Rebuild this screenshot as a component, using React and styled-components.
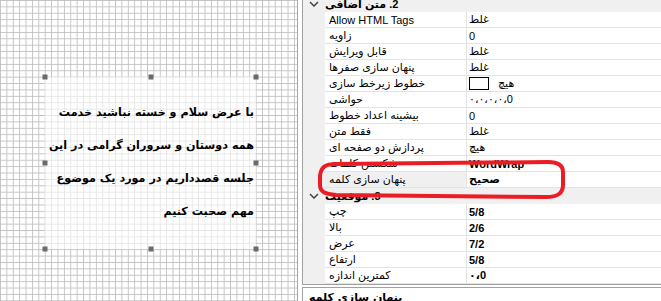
import React from 'react';
import styled, { createGlobalStyle } from 'styled-components';

const GlobalStyle = createGlobalStyle`
  html, body {
    margin: 0;
    padding: 0;
    background: #fff;
  }
  body {
    width: 661px;
    height: 301px;
    overflow: hidden;
    font-family: "Liberation Sans", "DejaVu Sans", sans-serif;
  }
`

const Screen = styled.div`
  position: relative;
  display: flex;
  width: 661px;
  height: 301px;
  overflow: hidden;
  background: #fff;
`

const Canvas = styled.div`
  width: 298px;
  height: 301px;
  flex-shrink: 0;
  box-sizing: border-box;
  border-right: 1px solid #a8a8a8;
  padding: 77px 0 0 45px;
  background-color: #fff;
  background-image:
    linear-gradient(to right, #c2c2c2 1px, transparent 1px),
    linear-gradient(to bottom, #c2c2c2 1px, transparent 1px);
  background-size: 6.4px 6.4px;
`

const TextBox = styled.div`
  position: relative;
  width: 211px;
  height: 172px;
  box-sizing: border-box;
  padding: 19px 2px 0 0;
  background: rgba(255, 255, 255, 0.6);
  direction: rtl;
  text-align: right;
  white-space: nowrap;
  font-family: "DejaVu Sans", sans-serif;
  font-weight: bold;
  font-size: 11.2px;
  line-height: 33px;
  color: #000;
`

const Handle = styled.span`
  position: absolute;
  left: ${p => p.$x}%;
  top: ${p => p.$y}%;
  width: 5px;
  height: 5px;
  background: #6b6b6b;
  transform: translate(-50%, -50%);
`

const Panel = styled.div`
  display: flex;
  flex-direction: column;
  flex: 1;
  min-width: 0;
  margin-left: 4px;
`

const Grid = styled.div`
  height: 285px;
  flex-shrink: 0;
  box-sizing: border-box;
  border-left: 1px solid #a0a0a0;
  border-bottom: 1px solid #a0a0a0;
  overflow: hidden;
  background: #f0f0f0;
`

const List = styled.div`
  margin-top: -4px;
`

const Row = styled.div`
  display: grid;
  grid-template-columns: 22px 142px 1fr;
  height: 16px;
  font-size: 11px;
  color: #000;
`

const Gutter = styled.div`
  display: flex;
  align-items: center;
  justify-content: center;
  background: #f0f0f0;
`

const Name = styled.div`
  display: flex;
  align-items: center;
  box-sizing: border-box;
  padding-left: 4px;
  border-bottom: 1px solid #e3e3e3;
  border-right: 1px solid #e3e3e3;
  background: ${p => (p.$selected ? '#f0f0f0' : '#fff')};
  white-space: nowrap;
  overflow: hidden;
`

const Value = styled.div`
  display: flex;
  align-items: center;
  gap: 9px;
  box-sizing: border-box;
  padding-left: 2px;
  border-bottom: 1px solid #e3e3e3;
  background: #fff;
  font-weight: ${p => (p.$bold ? 'bold' : 'normal')};
  white-space: nowrap;
`

const Swatch = styled.span`
  width: 18px;
  height: 11px;
  border: 1px solid #000;
  background: #fff;
`

const CategoryRow = styled(Row)`
  background: #f0f0f0;
`

const CategoryLabel = styled.div`
  grid-column: 2 / 4;
  display: flex;
  align-items: center;
  direction: rtl;
  justify-content: flex-end;
  font-weight: bold;
`

const Description = styled.div`
  flex: 1;
  min-height: 0;
  overflow: hidden;
  margin-top: 2px;
  box-sizing: border-box;
  border-top: 1px solid #a0a0a0;
  border-left: 1px solid #a0a0a0;
  padding: 3px 6px 0;
  font-family: "DejaVu Sans", sans-serif;
  font-size: 11px;
  font-weight: bold;
`

const Overlay = styled.svg`
  position: absolute;
  left: 0;
  top: 0;
  pointer-events: none;
`

const Chevron = () => (
  <svg width="10" height="6" viewBox="0 0 10 6">
    <polyline points="1,1 5,5 9,1" fill="none" stroke="#444" strokeWidth="1.5" />
  </svg>
)

const Category = ({ label }) => (
  <CategoryRow>
    <Gutter><Chevron /></Gutter>
    <CategoryLabel>{label}</CategoryLabel>
  </CategoryRow>
)

const Prop = ({ name, value, bold, selected, swatch }) => (
  <Row>
    <Gutter />
    <Name $selected={selected}>{name}</Name>
    <Value $bold={bold}>
      {swatch && <Swatch />}
      {value}
    </Value>
  </Row>
)

const handles = [
  [0, 0], [50, 0], [100, 0],
  [0, 50], [100, 50],
  [0, 100], [50, 100], [100, 100],
]

const textProps = [
  { name: 'Allow HTML Tags', value: 'غلط' },
  { name: 'زاویه', value: '0' },
  { name: 'قابل ویرایش', value: 'غلط' },
  { name: 'پنهان سازی صفرها', value: 'غلط' },
  { name: 'خطوط زیرخط سازی', value: 'هیچ', swatch: true },
  { name: 'حواشی', value: '۰،۰،۰،۰،0' },
  { name: 'بیشینه اعداد خطوط', value: '0' },
  { name: 'فقط متن', value: 'غلط' },
  { name: 'پردازش دو صفحه ای', value: 'هیچ' },
  { name: 'شکستن کلمات', value: 'WordWrap', bold: true },
  { name: 'پنهان سازی کلمه', value: 'صحیح', bold: true, selected: true },
]

const positionProps = [
  { name: 'چپ', value: '5/8', bold: true },
  { name: 'بالا', value: '2/6', bold: true },
  { name: 'عرض', value: '7/2', bold: true },
  { name: 'ارتفاع', value: '5/8', bold: true },
  { name: 'کمترین اندازه', value: '۰،0', bold: true },
]

const App = () => {
  return (
    <Screen>
      <GlobalStyle />
      <Canvas>
        <TextBox>
          با عرض سلام و خسته نباشید خدمت
          <br />
          همه دوستان و سروران گرامی در این
          <br />
          جلسه قصدداریم در مورد یک موضوع
          <br />
          مهم صحبت کنیم
          {handles.map(([x, y]) => (
            <Handle key={`${x}-${y}`} $x={x} $y={y} />
          ))}
        </TextBox>
      </Canvas>
      <Panel>
        <Grid>
          <List>
            <Category label="2. متن اضافی" />
            {textProps.map(p => <Prop key={p.name} {...p} />)}
            <Category label="3. موقعیت" />
            {positionProps.map(p => <Prop key={p.name} {...p} />)}
          </List>
        </Grid>
        <Description>پنهان سازی کلمه</Description>
      </Panel>
      <Overlay width="661" height="301" viewBox="0 0 661 301">
        <path
          d="M336 164 C325 164 321 167 320 176 L320 185 C320 192 325 194 336 195 L546 197 C558 197 563 193 563 185 L563 172 C563 165 558 162 548 162 Z"
          fill="none"
          stroke="#ec1c24"
          strokeWidth="4"
          strokeLinejoin="round"
        />
      </Overlay>
    </Screen>
  )
}

export default App;
